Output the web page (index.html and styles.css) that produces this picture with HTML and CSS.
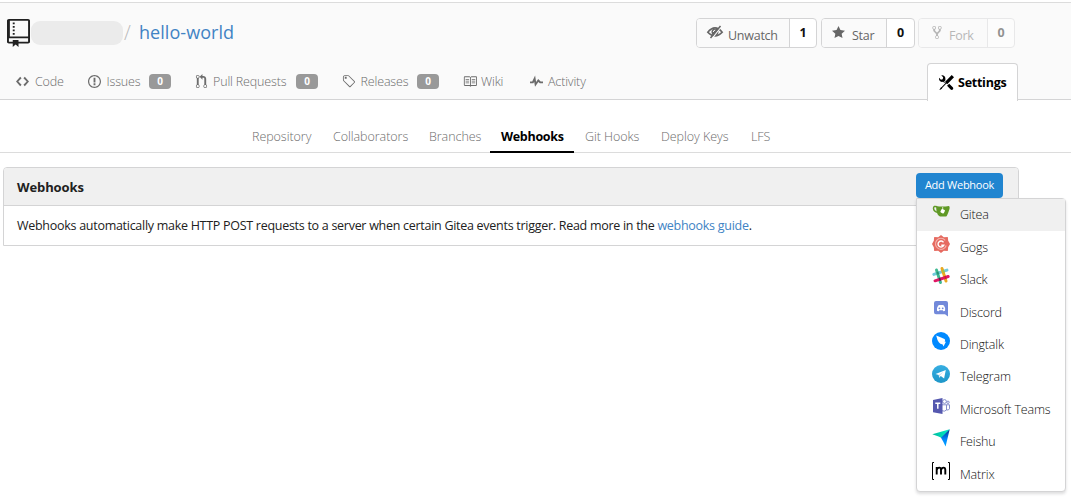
FILE: index.html
```html
<!DOCTYPE html>
<html lang="en">
<head>
<meta charset="utf-8">
<title>hello-world - Webhooks</title>
<link rel="stylesheet" href="styles.css">
</head>
<body>
<header class="repo-header">
  <div class="repo-top">
    <div class="repo-title">
      <svg class="repo-icon" viewBox="0 0 12 16" preserveAspectRatio="none"><path d="M4 9H3V8h1v1zm0-3H3v1h1V6zm0-2H3v1h1V4zm0-2H3v1h1V2zm8-1v12c0 .55-.45 1-1 1H6v2l-1.500-1.500L3 16v-2H1c-.55 0-1-.45-1-1V1c0-.55.45-1 1-1h10c.55 0 1 .45 1 1zm-1 10H1v2h2v-1h3v1h5v-2zm0-10H1.500v9H11V1z"/></svg>
      <span class="owner"></span>
      <span class="slash">/</span>
      <a class="repo-name">hello-world</a>
    </div>
    <div class="repo-buttons">
      <div class="split watch"><span class="action"><svg class="eye" viewBox="0 0 16 12"><path d="M.8 6.200Q8-2.500 15.200 6.200Q8 13.800.8 6.200Z" fill="none" stroke="currentColor" stroke-width="1.600"/><circle cx="8" cy="5.900" r="3.500"/><path d="M6.300 6Q6.300 4.300 8.300 4.100" fill="none" stroke="#fafafa" stroke-width="1"/><path d="M14 .8L5 12.600" stroke="#fafafa" stroke-width="1.300"/><path d="M13.500 0L3.500 12" stroke="currentColor" stroke-width="1.500"/></svg><span class="t">Unwatch</span></span><span class="count">1</span></div>
      <div class="split star"><span class="action"><svg viewBox="0 0 14 16" width="13" height="15"><path d="M14 6l-4.900-.64L7 1 4.900 5.360 0 6l3.600 3.260L2.670 14 7 11.670 11.330 14l-.93-4.740L14 6z"/></svg><span class="t">Star</span></span><span class="count">0</span></div>
      <div class="split fork"><span class="action"><svg viewBox="0 0 10 16" width="10" height="15"><path d="M8 1a1.993 1.993 0 0 0-1 3.720V6L5 8 3 6V4.720A1.993 1.993 0 0 0 2 1a1.993 1.993 0 0 0-1 3.720V6.500l3 3v1.780A1.993 1.993 0 0 0 5 15a1.993 1.993 0 0 0 1-3.720V9.500l3-3V4.720A1.993 1.993 0 0 0 8 1zM2 4.200C1.340 4.200.8 3.650.8 3c0-.65.55-1.200 1.200-1.200.65 0 1.200.55 1.200 1.200 0 .65-.55 1.200-1.200 1.200zm3 10c-.66 0-1.200-.55-1.200-1.200 0-.65.55-1.200 1.200-1.200.65 0 1.200.55 1.200 1.200 0 .65-.55 1.200-1.200 1.200zm3-10c-.66 0-1.200-.55-1.200-1.200 0-.65.55-1.200 1.200-1.200.65 0 1.200.55 1.200 1.200 0 .65-.55 1.200-1.200 1.200z"/></svg><span class="t">Fork</span></span><span class="count">0</span></div>
    </div>
  </div>
  <nav class="tabs">
    <a class="tab code"><svg viewBox="0 0 14 16"><path d="M9.500 3L8 4.500 11.500 8 8 11.500 9.500 13 14 8 9.500 3zm-5 0L0 8l4.500 5L6 11.500 2.500 8 6 4.500 4.500 3z"/></svg><span class="t">Code</span></a>
    <a class="tab issues"><svg viewBox="0 0 14 16"><path d="M7 2.300c3.140 0 5.700 2.560 5.700 5.700s-2.560 5.700-5.700 5.700A5.710 5.710 0 0 1 1.300 8c0-3.140 2.560-5.700 5.700-5.700zM7 1C3.140 1 0 4.140 0 8s3.140 7 7 7 7-3.140 7-7-3.140-7-7-7zm1 3H6v5h2V4zm0 6H6v2h2v-2z"/></svg><span class="t">Issues</span><b class="badge">0</b></a>
    <a class="tab pulls"><svg viewBox="0 0 12 16"><path d="M11 11.280V5c-.03-.78-.34-1.470-.94-2.060C9.460 2.350 8.780 2.030 8 2H7V0L4 3l3 3V4h1c.27.02.48.11.69.31.21.2.3.42.31.69v6.280A1.993 1.993 0 0 0 10 15a1.993 1.993 0 0 0 1-3.720zm-1 2.920c-.66 0-1.200-.55-1.200-1.200 0-.65.55-1.200 1.200-1.200.65 0 1.200.55 1.200 1.200 0 .65-.55 1.200-1.200 1.200zM4 3c0-1.110-.89-2-2-2a1.993 1.993 0 0 0-1 3.720v6.560A1.993 1.993 0 0 0 2 15a1.993 1.993 0 0 0 1-3.720V4.720c.59-.34 1-.98 1-1.720zm-.8 10c0 .66-.55 1.200-1.200 1.200-.65 0-1.200-.55-1.200-1.200 0-.65.55-1.200 1.200-1.200.65 0 1.200.55 1.200 1.200zM2 4.200C1.340 4.200.8 3.650.8 3c0-.65.55-1.200 1.200-1.200.65 0 1.200.55 1.200 1.200 0 .65-.55 1.200-1.200 1.200z"/></svg><span class="t">Pull Requests</span><b class="badge">0</b></a>
    <a class="tab releases"><svg viewBox="0 0 14 16"><path d="M7.730 1.730C7.260 1.260 6.620 1 5.960 1H3.500C2.130 1 1 2.130 1 3.500v2.470c0 .66.27 1.300.73 1.770l6.060 6.060c.39.39 1.020.39 1.410 0l4.590-4.590a.996.996 0 0 0 0-1.410L7.730 1.730zM2.380 7.090c-.31-.3-.47-.7-.47-1.130V3.500c0-.88.72-1.590 1.590-1.590h2.470c.42 0 .83.16 1.130.47l6.140 6.130-4.730 4.730-6.130-6.150zM3.010 3h2v2H3V3h.01z"/></svg><span class="t">Releases</span><b class="badge">0</b></a>
    <a class="tab wiki"><svg viewBox="0 0 16 16"><path d="M3 5h4v1H3V5zm0 3h4V7H3v1zm0 2h4V9H3v1zm11-5h-4v1h4V5zm0 2h-4v1h4V7zm0 2h-4v1h4V9zm2-6v9c0 .55-.45 1-1 1H9.500l-1 1-1-1H2c-.55 0-1-.45-1-1V3c0-.55.45-1 1-1h5.500l1 1 1-1H15c.55 0 1 .45 1 1zm-8 .5L7.500 3H2v9h6V3.500zm7-.5H9.500l-.5.5V12h6V3z"/></svg><span class="t">Wiki</span></a>
    <a class="tab activity"><svg viewBox="0 0 14 16"><path d="M11.500 8L8.800 5.400 6.600 8.500 5.500 1.600 2.380 8H0v2h3.600l.9-1.800.9 5.400L9 8.500l1.600 1.500H14V8h-2.500z"/></svg><span class="t">Activity</span></a>
    <a class="tab settings"><svg viewBox="0 0 16 16"><path d="M4.480 7.270c.26.26 1.280 1.330 1.280 1.330l.56-.58-.88-.91 1.690-1.800s-.76-.74-.43-.45c.32-1.190.03-2.510-.87-3.440C4.930.5 3.660.2 2.520.51l1.930 2-.51 1.960-1.890.52-1.930-1.990C-.19 4.170.1 5.480 1 6.400c.94.98 2.290 1.260 3.480.87zm6.440 1.940l-2.330 2.300 3.840 3.980c.31.33.73.49 1.140.49.41 0 .82-.16 1.140-.49.63-.65.63-1.700 0-2.350l-3.790-3.930zM16 2.530L13.550 0 6.330 7.460l.88.91-4.310 4.460-.99.53-1.390 2.270.35.37 2.200-1.440.51-1.020L7.900 9.080l.88.91L16 2.530z"/></svg><span class="t">Settings</span></a>
  </nav>
</header>
<nav class="subnav">
  <a class="s1">Repository</a><a class="s2">Collaborators</a><a class="s3">Branches</a><a class="s4 active">Webhooks</a><a class="s5">Git Hooks</a><a class="s6">Deploy Keys</a><a class="s7">LFS</a>
</nav>
<main class="panel">
  <div class="panel-head">
    <h4>Webhooks</h4>
    <div class="dropdown">
      <button class="add">Add Webhook</button>
      <div class="menu">
        <a class="item selected"><svg viewBox="0 0 18 18"><path d="M5 3.800Q1.600 2.500 1.500 5.300Q1.700 8.900 6 9.500" fill="none" stroke="#609926" stroke-width="1.500"/><path d="M4 3Q10 4.200 17 3Q18.300 4 17 7.500Q15 13.500 14 13.500H8Q5.500 12.500 4.500 8Z" fill="#609926"/><rect x="8.800" y="6.300" width="3.800" height="3.800" rx=".8" transform="rotate(27 10.700 8.200)" fill="#fff"/><path d="M10.700 4v2.500" stroke="#fff" stroke-width=".7"/></svg><span>Gitea</span></a>
        <a class="item gogs"><svg viewBox="0 0 18 18"><path d="M9 0l2.800 2.200 4-.2.400 3.800L18 9l-1.800 3.200-.4 3.800-4-.2L9 18l-2.800-2.200-4 .2-.4-3.800L0 9l1.800-3.200L2.200 2l4 .2Z" fill="#e66a60"/><path d="M13.200 5.300A5.500 5.500 0 1 0 14.200 10.500" fill="none" stroke="#f3b5ae" stroke-width="1.100"/><path d="M11.500 7.300A3 3 0 1 0 11.800 10.300H9.300" fill="none" stroke="#fff" stroke-width="1.400"/></svg><span>Gogs</span></a>
        <a class="item"><svg viewBox="0 0 18 18"><g fill="none" stroke-width="2.900" stroke-linecap="round"><path d="M1.800 7.400L15 3.100" stroke="#70cadb"/><path d="M4.500 3L8.500 15.500" stroke="#3eb991"/><path d="M10 1.500L14 14" stroke="#e9a820"/><path d="M3 13.800L16.200 9.500" stroke="#e01765"/></g><g stroke-width="2.900"><path d="M5.100 6.300l1.500-.5" stroke="#258b76"/><path d="M10.800 4.500l1.500-.5" stroke="#9bc24c"/><path d="M7.100 12.500l1.500-.5" stroke="#472d4b"/><path d="M12.700 10.600l1.500-.5" stroke="#cc2027"/></g></svg><span>Slack</span></a>
        <a class="item"><svg viewBox="0 0 18 18"><path d="M4 1h10q2 0 2 2v13.500l-3-2.300H4q-2 0-2-2V3q0-2 2-2Z" fill="#7289da"/><path d="M5 10.700Q4.800 7 6.200 5.400Q7.300 4.700 8 5.100h2Q11 4.600 11.900 5.400Q13.400 7 13.100 10.700Q12 11.500 11.200 11l-.5-.7H7.400L6.900 11Q6 11.500 5 10.700Z" fill="#fff"/><circle cx="7.400" cy="8.300" r=".9" fill="#7289da"/><circle cx="10.700" cy="8.300" r=".9" fill="#7289da"/></svg><span>Discord</span></a>
        <a class="item"><svg viewBox="0 0 18 18"><circle cx="9" cy="9" r="9" fill="#0089ff"/><path d="M4.200 3.500Q8.500 5 12.500 7Q13.700 7.800 12.700 9.700h1.200L11.500 14.500l-.8-2Q8 12.200 6.800 10.300L5.500 8Z" fill="#fff"/></svg><span>Dingtalk</span></a>
        <a class="item"><svg viewBox="0 0 18 18"><defs><linearGradient id="tg" x2="0" y2="1"><stop stop-color="#37aee2"/><stop offset="1" stop-color="#1e96c8"/></linearGradient></defs><circle cx="9" cy="9" r="9" fill="url(#tg)"/><path d="M3.500 9L13.800 5l-1.700 8.500L8.800 11l-1.700 1.700-.3-2.700Z" fill="#fff"/><path d="M6.800 10l5-3.500L8 10.200l-.9 2.500Z" fill="#c8daea"/></svg><span>Telegram</span></a>
        <a class="item"><svg viewBox="0 0 18 18"><g fill="none" stroke="#7b83c5" stroke-width=".9"><circle cx="12.500" cy="4.500" r="1.900"/><circle cx="16" cy="5.300" r="1.200"/><path d="M10 7.800h4.500V13q-2 2-4.500.7M14.500 7.800h3v4q-1 2-3 1"/></g><path d="M1 3L10.500 1v16L1 15.200Z" fill="#5558af"/><path d="M3.300 6.200h5M5.800 6.200v5.600" stroke="#fff" stroke-width="1.500"/></svg><span>Microsoft Teams</span></a>
        <a class="item"><svg viewBox="0 0 18 18"><defs><linearGradient id="fg"><stop stop-color="#00b99d"/><stop offset="1" stop-color="#00f0c8"/></linearGradient><linearGradient id="fb" x2="0" y2="1"><stop stop-color="#00348c"/><stop offset=".6" stop-color="#0088ff"/><stop offset="1" stop-color="#00a8ff"/></linearGradient></defs><path d="M.3 5.300L17.700.3 9.700 9 6.600 7.600Z" fill="url(#fg)"/><path d="M17.700.3L13.600 17.500l-2.300-4.800-2.300-3.900Z" fill="url(#fb)"/></svg><span>Feishu</span></a>
        <a class="item matrix"><svg viewBox="0 0 18 18"><path d="M2 .5H.5v17H2M16 .5h1.500v17H16" fill="none" stroke="#000"/><path d="M4.700 12.500V5M4.700 8Q5.500 5.600 7.200 5.600Q9 5.600 9 8v4.500M9 8Q9.800 5.600 11.500 5.600Q13.300 5.600 13.300 8v4.500" fill="none" stroke="#000" stroke-width="1.900"/></svg><span>Matrix</span></a>
      </div>
    </div>
  </div>
  <p class="panel-body">Webhooks automatically make HTTP POST requests to a server when certain Gitea events trigger. Read more in the <a>webhooks guide</a>.</p>
</main>
</body>
</html>
```
FILE: styles.css
```css
* { box-sizing: border-box; }
body { margin: 0; padding-top: 2px; min-height: 497px; background: #fff; font: 13px/18px "Open Sans", "Noto Sans", sans-serif; color: #212121; }
svg { display: block; flex: none; fill: currentColor; }
.t { white-space: nowrap; flex: none; }
.repo-header { height: 98px; background: #fafafa; border-top: 1px solid #dcdcdc; border-bottom: 1px solid #d4d4d5; }
.repo-top { display: flex; justify-content: space-between; height: 60px; padding: 15px 56px 0 7px; }
.repo-title { display: flex; align-items: flex-start; }
.repo-icon { width: 23px; height: 28px; margin-top: 1px; }
.owner { width: 92px; height: 24px; margin: 3px 0 0 1px; background: #ebebeb; border-radius: 9px; }
.slash { font-size: 20px; line-height: 30px; color: #bbb; font-weight: 300; width: 16px; padding-left: 1px; }
.repo-name { font-size: 18px; line-height: 28px; color: #4183c4; letter-spacing: .05px; }
.repo-buttons { display: flex; gap: 4px; }
.split { display: flex; height: 30px; border: 1px solid #d4d4d5; border-radius: 4px; background: #fff; overflow: hidden; }
.action { flex: 1; display: flex; align-items: center; gap: 6px; background: #fafafa; color: #666; padding-left: 10px; }
.action svg { margin-top: -2px; }
.action .t { padding-top: 5px; font-size: 12.500px; letter-spacing: -.25px; }
.count { border-left: 1px solid #d4d4d5; font-weight: 700; font-size: 12.500px; color: #111; text-align: center; line-height: 28px; width: 28px; }
.watch { width: 121px; }
.watch .count { width: 27px; }
.watch .eye { width: 16px; height: 12px; margin-right: -1px; overflow: visible; }
.star { width: 94px; }
.star .t { margin-left: 1px; }
.fork { width: 97px; opacity: .45; }
.fork .count { width: 27px; }
.fork .action { padding-left: 13px; gap: 7px; }
.watch, .star { transform: translateX(1px); }
.tabs { display: flex; height: 37px; color: #6c6c6c; font-size: 12.500px; letter-spacing: -.15px; font-weight: 300; padding-left: 16px; }
.tab { display: flex; align-items: center; }
.tab svg { width: 13px; height: 15px; margin-right: 6px; }
.code { width: 72px; }
.issues { width: 107px; }
.pulls { width: 147px; }
.releases { width: 121px; }
.wiki { width: 67px; }
.activity { width: 80px; }
.tab.issues svg, .tab.releases svg { margin-right: 5.500px; }
.issues .t { width: 42.500px; }
.pulls .t { width: 83px; }
.tab.pulls svg { margin-right: 5px; }
.releases .t { width: 56.500px; }
.tab.wiki svg { width: 14px; margin-right: 4px; }
.tab.activity svg { margin-right: 5px; }
.badge { width: 22px; height: 15px; border-radius: 4px; background: #999; color: #fff; font: 700 10px/15px "Open Sans", sans-serif; text-align: center; }
.settings { margin: 0 0 -1px 317px; width: 91px; height: 38px; border: 1px solid #d4d4d5; border-bottom: 0; border-radius: 4px 4px 0 0; background: #fff; color: #000; font-weight: 700; letter-spacing: -.25px; padding-left: 11px; }
.tab.settings svg { width: 15px; margin-right: 4px; }
.subnav { height: 53px; border-bottom: 1px solid #dcdcdc; display: flex; align-items: flex-end; padding-left: 252px; color: #6c6c6c; font-size: 12.500px; font-weight: 300; letter-spacing: -.05px; }
.subnav a { height: 24px; white-space: nowrap; flex: none; }
.s1 { width: 81px; } .s2 { width: 96px; } .s3 { width: 61px; }
.subnav .s4 { width: 84px; padding-left: 11px; height: 25px; margin: 0 11px -1px 0; border-bottom: 2px solid #000; color: #000; font-weight: 700; letter-spacing: -.3px; }
.s5 { width: 76px; } .s6 { width: 90px; }
.panel { width: 1016px; margin: 14px 0 0 3px; border: 1px solid #d4d4d5; border-radius: 4px 4px 0 0; }
.panel-head { display: flex; justify-content: space-between; height: 38px; padding: 5px 15px 0 13px; background: #f0f0f0; border-bottom: 1px solid #d4d4d5; border-radius: 3px 3px 0 0; }
h4 { margin: 5px 0 0; font-size: 13px; line-height: 18px; letter-spacing: -.1px; }
.dropdown { position: relative; width: 87px; height: 25px; }
.add { display: block; width: 87px; height: 25px; border: 0; padding: 0 0 2px; border-radius: 4px; background: #2185d0; color: #fff; font: 11px/23px "Open Sans", sans-serif; letter-spacing: -.27px; }
.menu { position: absolute; top: 25px; left: 0; width: 150px; background: #fff; border: 1px solid #d4d4d5; border-radius: 0 4px 4px 4px; box-shadow: 0 2px 3px rgba(34,36,38,.15); }
.item { display: flex; height: 32.400px; padding: 5px 0 0 15px; font-size: 12.500px; font-weight: 300; letter-spacing: -.17px; color: #111; }
.item svg { width: 18px; height: 18px; margin: -1.400px 10px 0 0; }
.item span { padding-top: 2.400px; white-space: nowrap; }
.selected { background: #f0f0f0; }
.panel-body { margin: 0; height: 39px; padding: 11px 13px 10px; letter-spacing: -.28px; font-size: 12.500px; white-space: nowrap; }
.panel-body a { color: #4183c4; }
```
